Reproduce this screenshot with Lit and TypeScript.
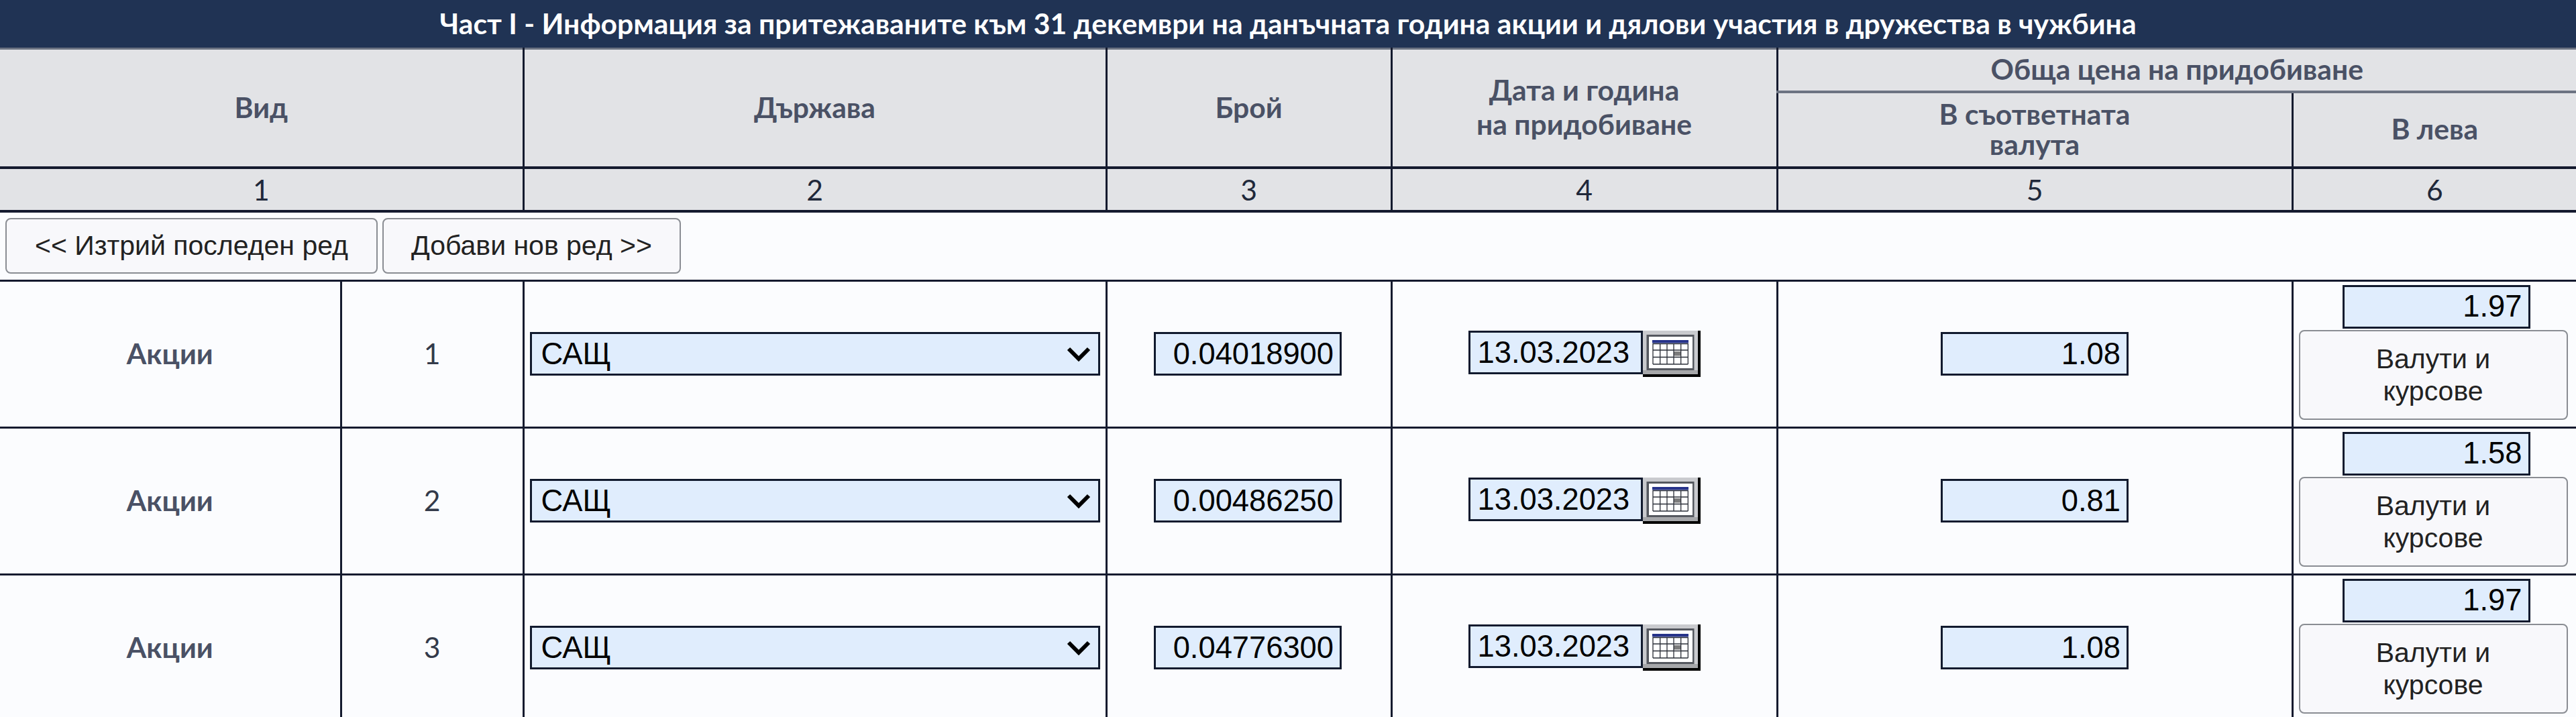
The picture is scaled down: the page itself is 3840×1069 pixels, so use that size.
import { LitElement, html, css } from "lit";
import { customElement } from "lit/decorators.js";

interface Row { n: number; qty: string; date: string; cur: string; lev: string; }

const ROWS: Row[] = [
  { n: 1, qty: "0.04018900", date: "13.03.2023", cur: "1.08", lev: "1.97" },
  { n: 2, qty: "0.00486250", date: "13.03.2023", cur: "0.81", lev: "1.58" },
  { n: 3, qty: "0.04776300", date: "13.03.2023", cur: "1.08", lev: "1.97" },
];

const calendar = html`<svg class="cal" viewBox="0 0 86 69" aria-hidden="true">
  <path d="M82 0h4v69H0v-4h82z" fill="#000" />
  <rect x="0" y="0" width="82" height="65" fill="#c9cace" />
  <rect x="0" y="59" width="82" height="6" fill="#a6a7aa" />
  <rect x="5.5" y="6" width="71" height="53" fill="#55585f" />
  <rect x="9" y="9" width="65" height="47" fill="#fff" />
  <rect x="14" y="14" width="54" height="4.5" fill="#27338a" />
  <rect x="46" y="31" width="11" height="6.5" fill="#7b7b7b" />
  <path d="M15 19v31M25.7 19v31M36 19v31M46 19v31M56.7 19v31M67.3 19v31M15 19.5h52.3M15 29h52.3M15 39.5h52.3M15 50h52.3"
    stroke="#2b2f38" stroke-width="1.3" fill="none" />
</svg>`;

@customElement("app-root")
export class AppRoot extends LitElement {
  static styles = css`
    :host {
      display: block;
      height: 1069px;
      overflow: hidden;
      background: #fbfcfe;
      font-family: "Liberation Sans", Arial, sans-serif;
      color: #111;
    }
    table {
      width: 3840px;
      table-layout: fixed;
      border-collapse: collapse;
    }
    th, td {
      padding: 0;
      text-align: center;
      vertical-align: middle;
      border: 3px solid #141a2e;
    }
    tr > :first-child { border-left: 0; }
    tr > :last-child { border-right: 0; }
    .title {
      height: 68px;
      padding-bottom: 3px;
      background: #203354;
      color: #fff;
      border: 0;
      font: 700 42.67px "Lato", sans-serif;
    }
    .head th {
      background: #e2e3e6;
      color: #4a5165;
      padding-bottom: 3px;
      font: 700 42.67px/51px "Lato", sans-serif;
      border-top-color: #6c7382;
    }
    .r2 { height: 64px; }
    .r3 { height: 113px; }
    .r3 th { border-top-width: 4px; line-height: 45px; }
    .nums td {
      height: 61px;
      background: #e2e3e6;
      color: #20283a;
      border-top-width: 4px;
      border-bottom-width: 4px;
      font: 400 42.67px "Lato", sans-serif;
    }
    .actions td {
      height: 100px;
      text-align: left;
      vertical-align: middle;
      padding-left: 8px;
    }
    button {
      font: 400 41px "Liberation Sans", Arial, sans-serif;
      color: #222;
      background: #f8f8fb;
      border: 2px solid #8a8d93;
      border-radius: 8px;
      padding: 0;
    }
    .actions button { height: 83px; }
    .del { width: 555px; margin-right: 7px; }
    .add { width: 445px; }
    .data { height: 219px; }
    .kind {
      color: #4a5165;
      padding-bottom: 3px;
      font: 700 42.67px "Lato", sans-serif;
    }
    .idx {
      color: #333a4a;
      padding-bottom: 3px;
      font: 400 42.67px "Lato", sans-serif;
    }
    .box {
      box-sizing: border-box;
      height: 65px;
      border: 3px solid #111a2e;
      background: #e0edfd;
      border-radius: 0;
      font: 400 45.3px "Liberation Sans", Arial, sans-serif;
      color: #000;
      outline: none;
      vertical-align: middle;
    }
    .num {
      width: 280px;
      text-align: right;
      padding: 0 9px 0 0;
    }
    .qty { margin-right: 3px; }
    .sel {
      width: 850px;
      padding: 0 0 0 14px;
      appearance: none;
      -webkit-appearance: none;
      background-image: url("data:image/svg+xml,%3Csvg xmlns='http://www.w3.org/2000/svg' viewBox='0 0 36 22'%3E%3Cpath d='M3 3l15 15L33 3' fill='none' stroke='%23000' stroke-width='6'/%3E%3C/svg%3E");
      background-repeat: no-repeat;
      background-size: 36px 22px;
      background-position: right 11px center;
    }
    .datewrap {
      display: inline-flex;
      align-items: flex-start;
      vertical-align: middle;
    }
    .date {
      width: 260px;
      padding: 0 0 0 11px;
      text-align: left;
    }
    .cal { width: 86px; height: 69px; display: block; }
    .levcell { vertical-align: top; padding-top: 5px; }
    .lev { display: block; margin: 0 0 2px 73px; }
    .rates {
      display: block;
      box-sizing: border-box;
      width: 401px;
      height: 134px;
      margin-left: 8px;
      line-height: 48px;
    }
  `;

  render() {
    return html`
      <table lang="bg">
        <colgroup>
          <col style="width:508px" /><col style="width:272px" /><col style="width:869px" />
          <col style="width:425px" /><col style="width:575px" /><col style="width:768px" />
          <col style="width:423px" />
        </colgroup>
        <tbody>
          <tr>
            <th class="title" colspan="7">Част I - Информация за притежаваните към 31 декември на данъчната година акции и дялови участия в дружества в чужбина</th>
          </tr>
          <tr class="head r2">
            <th colspan="2" rowspan="2">Вид</th>
            <th rowspan="2">Държава</th>
            <th rowspan="2">Брой</th>
            <th rowspan="2">Дата и година<br />на придобиване</th>
            <th colspan="2">Обща цена на придобиване</th>
          </tr>
          <tr class="head r3">
            <th>В съответната<br />валута</th>
            <th>В лева</th>
          </tr>
          <tr class="nums">
            <td colspan="2">1</td><td>2</td><td>3</td><td>4</td><td>5</td><td>6</td>
          </tr>
          <tr class="actions">
            <td colspan="7">
              <button class="del">&lt;&lt; Изтрий последен ред</button><button class="add">Добави нов ред &gt;&gt;</button>
            </td>
          </tr>
          ${ROWS.map(
            (r) => html`
              <tr class="data">
                <td class="kind">Акции</td>
                <td class="idx">${r.n}</td>
                <td>
                  <select class="box sel"><option>САЩ</option></select>
                </td>
                <td><input class="box num qty" .value=${r.qty} /></td>
                <td>
                  <span class="datewrap"><input class="box date" .value=${r.date} />${calendar}</span>
                </td>
                <td><input class="box num" .value=${r.cur} /></td>
                <td class="levcell">
                  <input class="box num lev" .value=${r.lev} />
                  <button class="rates">Валути и<br />курсове</button>
                </td>
              </tr>
            `
          )}
        </tbody>
      </table>
    `;
  }
}
